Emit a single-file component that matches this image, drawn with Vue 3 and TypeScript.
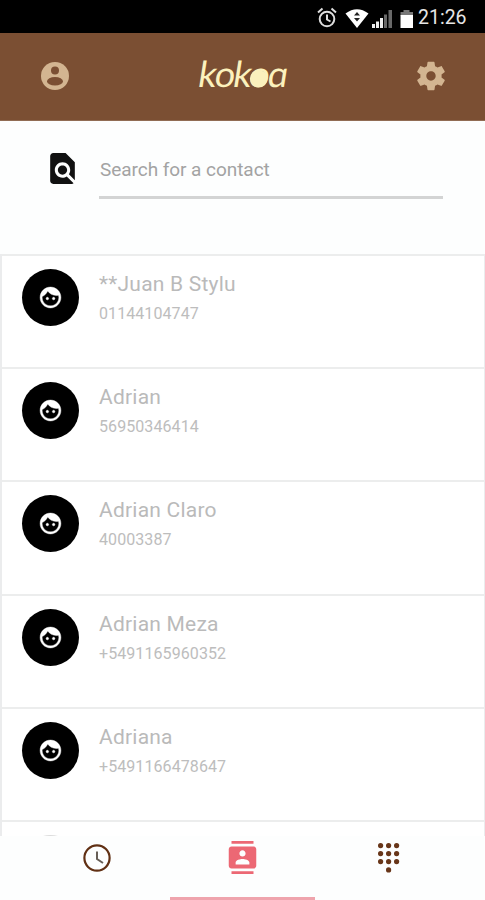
<script setup lang="ts">
interface Contact {
  name: string
  phone: string
}

const contacts: Contact[] = [
  { name: '**Juan B Stylu', phone: '01144104747' },
  { name: 'Adrian', phone: '56950346414' },
  { name: 'Adrian Claro', phone: '40003387' },
  { name: 'Adrian Meza', phone: '+5491165960352' },
  { name: 'Adriana', phone: '+5491166478647' },
]

const keys: [number, number][] = [
  [4, 4], [12, 4], [20, 4],
  [4, 12], [12, 12], [20, 12],
  [4, 20], [12, 20], [20, 20],
  [12, 28.3],
]
</script>

<template>
  <div class="phone">
    <div class="status">
      <svg class="status-icons" viewBox="0 0 98 24" width="98" height="24">
        <g fill="none" stroke="#ddd" stroke-width="2">
          <circle cx="11" cy="13" r="7.3" />
          <path d="M11 8.500v5l3.500 2M2 6.500l4.500-4M20 6.500l-4.500-4" />
        </g>
        <path d="M29.500 7.500Q41 -1 52.500 7.500L41 22z" fill="#fff" />
        <path d="M38 9.500l3-3.500 3 3.500zM38 12h6l-3 3.500z" fill="#222" />
        <path d="M56 18h3v4h-3zM60 15.500h3V22h-3zM64 12h3v10h-3z" fill="#eee" />
        <path d="M68 8.500h3V22h-3zM72.500 4H76v18h-3.500z" fill="#686868" />
        <path d="M87.500 4h6v2H97v3.500H84.500V6h3z" fill="#777" />
        <path d="M84.500 9H97v13H84.500z" fill="#fff" />
      </svg>
      <span class="time">21:26</span>
    </div>

    <header class="header">
      <svg class="account" viewBox="0 0 28 28" width="28" height="28">
        <circle cx="14" cy="14" r="14" fill="#d3b591" />
        <circle cx="14" cy="8.600" r="4" fill="#7b4f33" />
        <ellipse cx="14" cy="19.200" rx="8" ry="4.300" fill="#7b4f33" />
      </svg>
      <svg class="logo" viewBox="0 0 96 60" width="96" height="60" role="img">
        <text class="logo-text" transform="translate(-0.800 41) skewX(-9)" x="3.500 20 38.500 54.500 73" y="0">kokoɑ</text>
        <circle cx="64.700" cy="32.800" r="8.800" fill="#fbf1bd" />
      </svg>
      <svg class="gear" viewBox="0 0 24 24" width="34" height="34">
        <path fill="#d3b591" d="M19.430 12.980c.04-.32.07-.64.07-.98s-.03-.66-.07-.98l2.110-1.650c.19-.15.24-.42.12-.64l-2-3.460c-.12-.22-.39-.3-.61-.22l-2.490 1c-.52-.4-1.080-.73-1.690-.98l-.38-2.650C14.460 2.180 14.250 2 14 2h-4c-.25 0-.46.18-.49.42l-.38 2.650c-.61.25-1.170.59-1.690.98l-2.490-1c-.23-.09-.49 0-.61.22l-2 3.460c-.13.22-.07.49.12.64l2.110 1.650c-.04.32-.07.65-.07.98s.03.66.07.98l-2.110 1.650c-.19.15-.24.42-.12.64l2 3.460c.12.22.39.3.61.22l2.490-1c.52.4 1.080.73 1.690.98l.38 2.650c.03.24.24.42.49.42h4c.25 0 .46-.18.49-.42l.38-2.650c.61-.25 1.170-.59 1.690-.98l2.490 1c.23.09.49 0 .61-.22l2-3.460c.12-.22.07-.49-.12-.64l-2.110-1.650zM12 15.300c-1.820 0-3.300-1.480-3.300-3.300s1.480-3.300 3.300-3.300 3.300 1.480 3.300 3.300-1.480 3.300-3.300 3.300z" />
      </svg>
    </header>

    <section class="search">
      <svg class="find" viewBox="0 0 24 24" width="37" height="37">
        <path fill="#111" d="M20 19.590V8l-6-6H6c-1.100 0-1.990.9-1.990 2L4 20c0 1.100.89 2 1.990 2H18c.45 0 .85-.15 1.190-.4l-4.430-4.430c-.8.52-1.740.83-2.760.83-2.760 0-5-2.240-5-5s2.240-5 5-5 5 2.240 5 5c0 1.020-.31 1.960-.83 2.750L20 19.590zM9 13c0 1.660 1.340 3 3 3s3-1.340 3-3-1.340-3-3-3-3 1.340-3 3z" />
      </svg>
      <div class="field">Search for a contact</div>
    </section>

    <main class="list">
      <article v-for="c in contacts" :key="c.name" class="row">
        <div class="avatar">
          <svg viewBox="0 0 24 24" width="25" height="25">
            <path fill="#fff" stroke="#fff" stroke-width=".4" d="M9 11.750c-.69 0-1.250.56-1.250 1.250s.56 1.250 1.250 1.250 1.250-.56 1.250-1.250-.56-1.250-1.250-1.250zm6 0c-.69 0-1.250.56-1.250 1.250s.56 1.250 1.250 1.250 1.250-.56 1.250-1.250-.56-1.250-1.250-1.250zM12 2C6.480 2 2 6.480 2 12s4.480 10 10 10 10-4.480 10-10S17.520 2 12 2zm0 18c-4.410 0-8-3.590-8-8 0-.29.02-.58.05-.86 2.360-1.050 4.230-2.980 5.210-5.370C11.070 8.330 14.050 10 17.420 10c.78 0 1.530-.09 2.250-.26.21.71.33 1.470.33 2.260 0 4.410-3.590 8-8 8z" />
          </svg>
        </div>
        <div class="info">
          <div class="name">{{ c.name }}</div>
          <div class="phone-number">{{ c.phone }}</div>
        </div>
      </article>
      <article class="row">
        <div class="avatar faded"></div>
      </article>
    </main>

    <nav class="tabs">
      <div class="tab">
        <svg viewBox="0 0 28 28" width="28" height="28" fill="none">
          <circle cx="14" cy="14" r="12.600" stroke="#613014" stroke-width="2.200" />
          <path d="M14 7.500V15l6 4" stroke="#665e56" stroke-width="2" />
        </svg>
      </div>
      <div class="tab active">
        <svg viewBox="0 0 24 24" width="33" height="33">
          <path fill="#ec6874" d="M20 0H4v2h16V0zM4 24h16v-2H4v2zM20 4H4c-1.100 0-2 .9-2 2v12c0 1.100.9 2 2 2h16c1.100 0 2-.9 2-2V6c0-1.100-.9-2-2-2zm-8 2.750c1.240 0 2.250 1.010 2.250 2.250s-1.010 2.250-2.250 2.250S9.750 10.240 9.750 9 10.760 6.750 12 6.750zM17 17H7v-1.500c0-1.670 3.330-2.500 5-2.500s5 .83 5 2.500V17z" />
        </svg>
      </div>
      <div class="tab">
        <svg class="keypad" viewBox="-0.600 0.400 24 32" width="24" height="32">
          <circle v-for="([x, y], i) in keys" :key="i" :cx="x" :cy="y" r="2.600" fill="#683619" />
        </svg>
      </div>
    </nav>
  </div>
</template>

<style>
body {
  margin: 0;
  background: #fdfefe;
}
</style>

<style scoped>
.phone {
  width: 485px;
  height: 900px;
  display: flex;
  flex-direction: column;
  overflow: hidden;
  background: #fdfefe;
  font-family: Roboto, "Liberation Sans", sans-serif;
}
svg {
  display: block;
  flex: none;
}
.status {
  height: 33px;
  flex: none;
  box-sizing: border-box;
  background: #000;
  display: flex;
  justify-content: flex-end;
  align-items: center;
  gap: 4px;
  padding: 3px 19px 0 0;
}
.time {
  width: 48px;
  color: #e6e6e6;
  font-size: 19.5px;
  line-height: 24px;
  white-space: nowrap;
}
.header {
  height: 88px;
  flex: none;
  box-sizing: border-box;
  background: #7b4f33;
  border-bottom: 1px solid #916c54;
  display: flex;
  align-items: center;
  justify-content: space-between;
  padding: 0 37px 1px 41px;
}
.logo {
  overflow: visible;
}
.logo-text {
  font-family: Lato, sans-serif;
  font-size: 36px;
  fill: #fbf1bd;
}
.search {
  height: 133px;
  flex: none;
  box-sizing: border-box;
  display: flex;
  align-items: flex-start;
  gap: 18px;
  padding: 29px 42px 0 44px;
}
.field {
  flex: 1;
  height: 49px;
  box-sizing: border-box;
  border-bottom: 3px solid #d3d4d4;
  padding: 8px 0 0 1px;
  color: #a3a3a3;
  font-size: 19px;
  line-height: 24px;
  letter-spacing: -0.05px;
}
.list {
  flex: 1;
  min-height: 0;
  overflow: hidden;
  border-left: 2px solid #ebeced;
  border-right: 1px solid #ebeced;
  background: #fff;
}
.row {
  height: 113.2px;
  box-sizing: border-box;
  border-top: 2px solid #eceded;
  display: flex;
  gap: 20px;
  padding: 13px 0 0 20px;
}
.avatar {
  width: 57px;
  height: 57px;
  border-radius: 50%;
  background: #000;
  display: flex;
  align-items: center;
  justify-content: center;
}
.faded {
  background: #dcdcdc;
}
.info {
  padding-top: 3px;
}
.name {
  color: #bababa;
  font-size: 21px;
  line-height: 24px;
  letter-spacing: 0.22px;
}
.phone-number {
  margin-top: 8px;
  color: #bdbdbd;
  font-size: 16px;
  line-height: 20px;
  letter-spacing: 0.08px;
}
.tabs {
  height: 64px;
  flex: none;
  display: flex;
  padding: 0 24px;
}
.tab {
  flex: 1;
  box-sizing: border-box;
  display: flex;
  justify-content: center;
  align-items: center;
  padding-bottom: 18px;
  border-bottom: 3px solid transparent;
}
.active {
  border-bottom-color: #efa4ad;
}
</style>
